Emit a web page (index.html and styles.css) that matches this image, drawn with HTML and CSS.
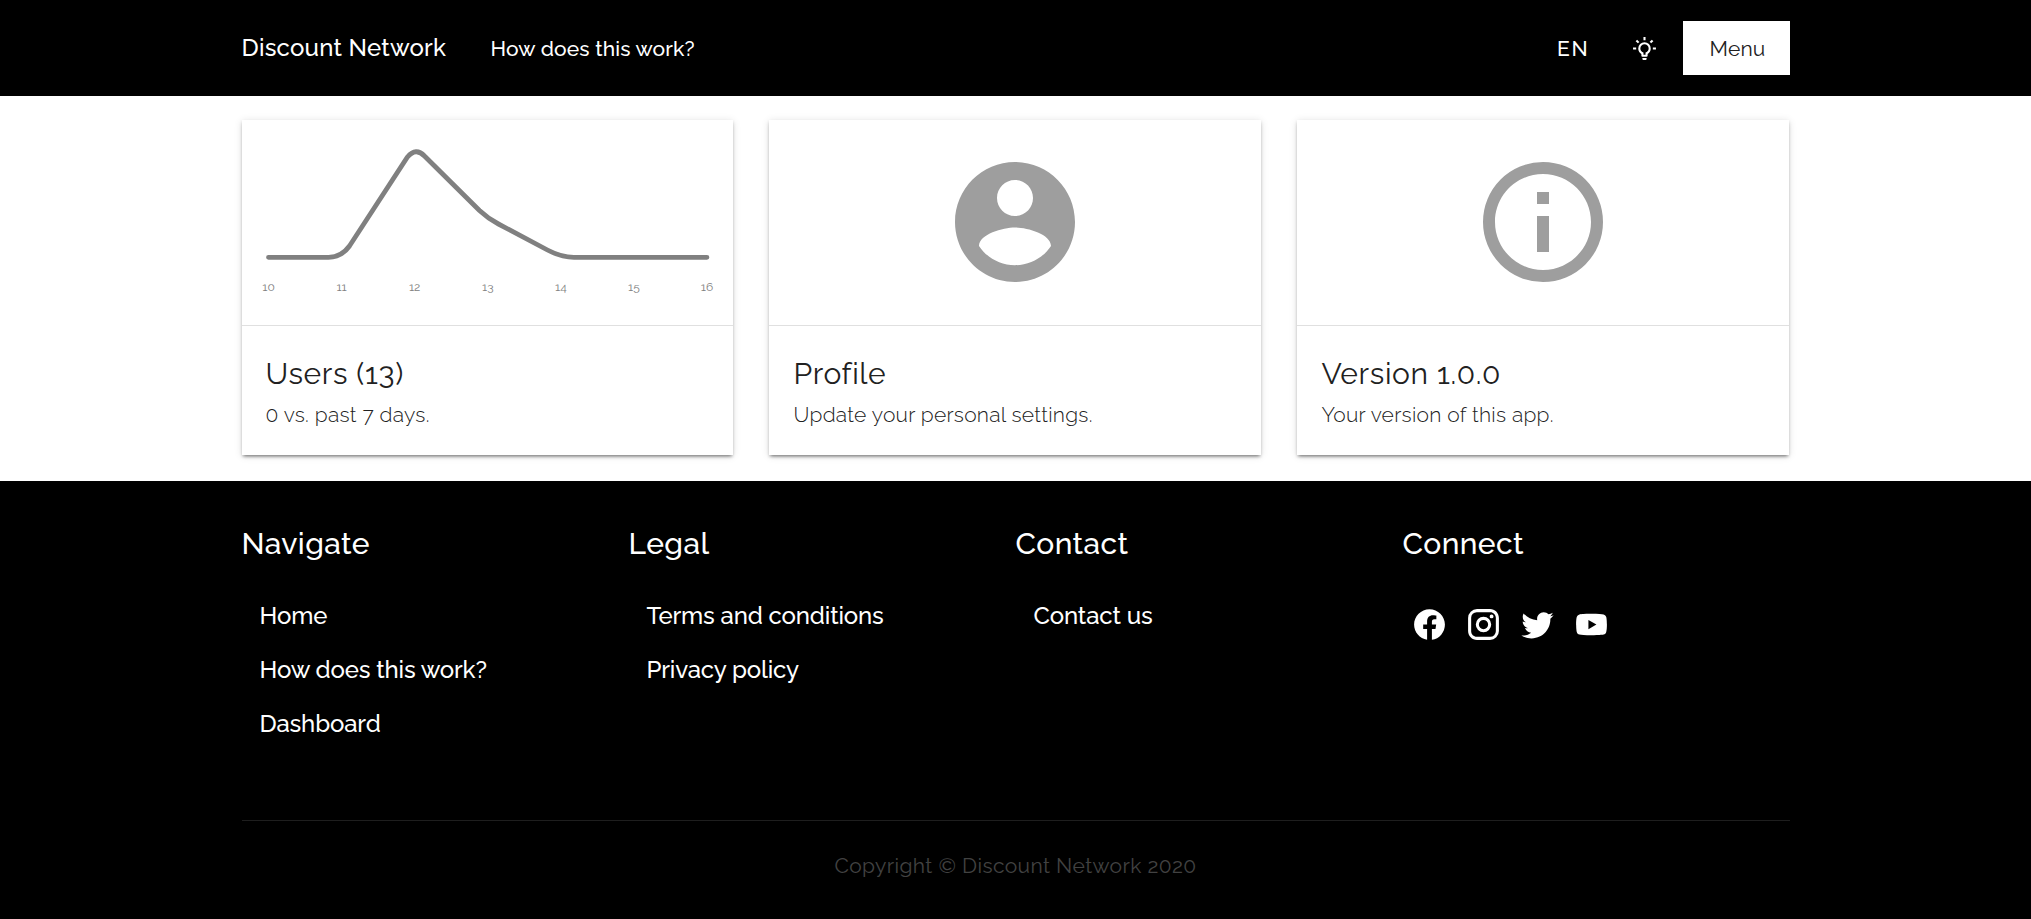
FILE: index.html
```html
<!DOCTYPE html>
<html lang="en">
<head>
<meta charset="utf-8">
<title>Discount Network</title>
<link rel="stylesheet" href="styles.css">
</head>
<body>
<header class="header">
  <div class="container bar">
    <a class="brand">Discount Network</a>
    <a class="nav-link">How does this work?</a>
    <div class="actions">
      <span class="lang">EN</span>
      <svg class="bulb" viewBox="0 0 24 24"><path d="M20,11H23V13H20V11M1,11H4V13H1V11M13,1V4H11V1H13M4.92,3.5L7.05,5.64L5.63,7.05L3.5,4.93L4.92,3.5M16.95,5.63L19.07,3.5L20.5,4.93L18.37,7.05L16.95,5.63M12,6A6,6 0 0,1 18,12C18,14.22 16.79,16.16 15,17.2V19A1,1 0 0,1 14,20H10A1,1 0 0,1 9,19V17.2C7.21,16.16 6,14.22 6,12A6,6 0 0,1 12,6M14,21V22A1,1 0 0,1 13,23H11A1,1 0 0,1 10,22V21H14M11,18H13V15.87C14.73,15.43 16,13.86 16,12A4,4 0 0,0 12,8A4,4 0 0,0 8,12C8,13.86 9.27,15.43 11,15.87V18Z"/></svg>
      <button class="menu">Menu</button>
    </div>
  </div>
</header>
<main class="container cards">
  <article class="card">
    <div class="media">
      <svg class="chart" viewBox="0 0 492 205">
        <path class="trend" d="M26.5 137.3H86.5Q99.5 137.3 107.5 126L165.5 37Q174 27 182.5 36L237.500 90.500Q246 98.500 256.500 104L305.500 130Q319.500 137.300 332 137.300H465"/>
        <g class="ticks"><text x="26.500" y="171">10</text><text x="99.600" y="171">11</text><text x="172.700" y="171">12</text><text x="245.800" y="171">13</text><text x="318.900" y="171">14</text><text x="392" y="171">15</text><text x="465" y="171">16</text></g>
      </svg>
    </div>
    <div class="body"><h2 class="title">Users (13)</h2><p class="sub">0 vs. past 7 days.</p></div>
  </article>
  <article class="card">
    <div class="media"><svg class="glyph" viewBox="0 0 24 24"><path d="M12 2C6.480 2 2 6.480 2 12s4.480 10 10 10 10-4.480 10-10S17.520 2 12 2zm0 3c1.660 0 3 1.340 3 3s-1.340 3-3 3-3-1.340-3-3 1.340-3 3-3zm0 14.200c-2.500 0-4.710-1.280-6-3.220.030-1.990 4-3.080 6-3.080 1.990 0 5.970 1.090 6 3.080-1.290 1.940-3.500 3.220-6 3.220z"/></svg></div>
    <div class="body"><h2 class="title">Profile</h2><p class="sub">Update your personal settings.</p></div>
  </article>
  <article class="card">
    <div class="media"><svg class="glyph" viewBox="0 0 24 24"><path d="M11 9h2V7h-2m1 13c-4.410 0-8-3.590-8-8s3.590-8 8-8 8 3.590 8 8-3.590 8-8 8m0-18A10 10 0 0 0 2 12a10 10 0 0 0 10 10 10 10 0 0 0 10-10A10 10 0 0 0 12 2m-1 15h2v-6h-2v6z"/></svg></div>
    <div class="body"><h2 class="title">Version 1.0.0</h2><p class="sub">Your version of this app.</p></div>
  </article>
</main>
<footer class="footer">
  <div class="container">
    <div class="columns">
      <section><h3 class="heading">Navigate</h3>
        <ul class="links"><li>Home</li><li>How does this work?</li><li>Dashboard</li></ul></section>
      <section><h3 class="heading">Legal</h3>
        <ul class="links"><li>Terms and conditions</li><li>Privacy policy</li></ul></section>
      <section><h3 class="heading">Contact</h3>
        <ul class="links"><li>Contact us</li></ul></section>
      <section><h3 class="heading">Connect</h3>
        <div class="social">
          <svg viewBox="0 0 24 24"><path d="M12 2.040C6.500 2.040 2 6.530 2 12.060C2 17.060 5.660 21.210 10.440 21.960V14.960H7.900V12.060H10.440V9.850C10.440 7.340 11.930 5.960 14.220 5.960C15.310 5.960 16.450 6.150 16.450 6.150V8.620H15.190C13.950 8.620 13.560 9.390 13.560 10.180V12.060H16.340L15.890 14.960H13.560V21.960A10 10 0 0 0 22 12.060C22 6.530 17.500 2.040 12 2.040Z"/></svg>
          <svg viewBox="0 0 24 24"><path d="M7.800,2H16.200C19.400,2 22,4.600 22,7.800V16.200A5.800,5.800 0 0,1 16.200,22H7.800C4.600,22 2,19.400 2,16.200V7.800A5.800,5.800 0 0,1 7.800,2M7.600,4A3.600,3.600 0 0,0 4,7.600V16.400C4,18.390 5.610,20 7.600,20H16.400A3.600,3.600 0 0,0 20,16.400V7.600C20,5.610 18.390,4 16.400,4H7.600M17.250,5.500A1.250,1.250 0 0,1 18.500,6.750A1.250,1.250 0 0,1 17.250,8A1.250,1.250 0 0,1 16,6.750A1.250,1.250 0 0,1 17.250,5.500M12,7A5,5 0 0,1 17,12A5,5 0 0,1 12,17A5,5 0 0,1 7,12A5,5 0 0,1 12,7M12,9A3,3 0 0,0 9,12A3,3 0 0,0 12,15A3,3 0 0,0 15,12A3,3 0 0,0 12,9Z"/></svg>
          <svg viewBox="0 0 24 24"><path d="M22.460,6C21.690,6.350 20.860,6.580 20,6.690C20.880,6.160 21.560,5.320 21.880,4.310C21.050,4.810 20.130,5.160 19.160,5.360C18.370,4.500 17.260,4 16,4C13.650,4 11.730,5.920 11.730,8.290C11.730,8.630 11.770,8.960 11.840,9.270C8.280,9.090 5.110,7.380 3,4.790C2.630,5.420 2.420,6.160 2.420,6.940C2.420,8.430 3.170,9.750 4.330,10.500C3.620,10.500 2.960,10.300 2.380,10V10.030C2.380,12.110 3.860,13.850 5.820,14.240C5.460,14.340 5.080,14.390 4.690,14.390C4.420,14.390 4.150,14.360 3.890,14.310C4.430,16 6,17.260 7.890,17.290C6.430,18.450 4.580,19.130 2.560,19.130C2.220,19.130 1.880,19.110 1.540,19.070C3.440,20.290 5.700,21 8.120,21C16,21 20.330,14.460 20.330,8.790C20.330,8.600 20.330,8.420 20.320,8.230C21.160,7.630 21.880,6.870 22.460,6Z"/></svg>
          <svg viewBox="0 0 24 24"><path d="M10,15L15.190,12L10,9V15M21.560,7.170C21.690,7.640 21.780,8.270 21.840,9.070C21.910,9.870 21.940,10.560 21.940,11.160L22,12C22,14.190 21.840,15.800 21.560,16.830C21.310,17.730 20.730,18.310 19.830,18.560C19.360,18.690 18.500,18.780 17.180,18.840C15.880,18.910 14.690,18.940 13.590,18.940L12,19C7.810,19 5.200,18.840 4.170,18.560C3.270,18.310 2.690,17.730 2.440,16.830C2.310,16.360 2.220,15.730 2.160,14.930C2.090,14.130 2.060,13.440 2.060,12.840L2,12C2,9.810 2.160,8.200 2.440,7.170C2.690,6.270 3.270,5.690 4.170,5.440C4.640,5.310 5.500,5.220 6.820,5.160C8.120,5.090 9.310,5.060 10.410,5.060L12,5C16.190,5 18.800,5.160 19.830,5.440C20.730,5.690 21.310,6.270 21.560,7.170Z"/></svg>
        </div></section>
    </div>
    <p class="copyright">Copyright © Discount Network 2020</p>
  </div>
</footer>
</body>
</html>
```
FILE: styles.css
```css
* { box-sizing: border-box; margin: 0; padding: 0; }
body { background: #fff; font-family: Raleway, Lato, "Open Sans", sans-serif; font-variant-numeric: oldstyle-nums; color: #212121; }
svg { display: block; flex: none; }
.container { width: 1548px; margin: 0 auto; }
.header { background: #000; color: #fff; height: 96px; }
.bar { display: flex; align-items: center; height: 96px; white-space: nowrap; }
.brand { width: 249px; font-size: 24px; font-weight: 500; letter-spacing: .009375em; padding-bottom: 1px; }
.nav-link { font-size: 21px; font-weight: 500; letter-spacing: .00714em; padding-top: 1px; }
.actions { margin-left: auto; display: flex; align-items: center; }
.lang { font-size: 21px; font-weight: 500; letter-spacing: 1.875px; margin-right: 42px; padding-top: 1px; }
.bulb { width: 25px; height: 25px; fill: #fff; margin-right: 26px; }
.menu { width: 107px; height: 54px; border: 0; background: #fff; color: #212121; font: inherit; font-size: 21px; letter-spacing: .15px; padding: 1px 0 0 3px; }
.cards { display: grid; grid-template-columns: repeat(3, 491.94px); gap: 36px; padding: 24px 0 26px; }
.card { height: 335px; background: #fff; box-shadow: 0 3px 3px -2px rgba(0,0,0,.4), 0 2px 3px 0 rgba(0,0,0,.16), 0 1px 8px 0 rgba(0,0,0,.12); }
.media { height: 206px; border-bottom: 1px solid #e0e0e0; display: flex; justify-content: center; }
.chart { width: 100%; height: 205px; }
.trend { fill: none; stroke: #808080; stroke-width: 4.8; stroke-linecap: round; }
.ticks { font-size: 12px; fill: #808080; text-anchor: middle; }
.glyph { width: 144px; height: 144px; margin-top: 30px; fill: #9e9e9e; }
.body { padding: 28px 24px 0; }
.title { font-size: 30px; font-weight: 400; line-height: 39px; letter-spacing: .021em; }
.sub { font-size: 21px; font-weight: 300; line-height: 31px; letter-spacing: .27px; margin-top: 6px; color: #212121; }
.footer { background: #000; color: #fff; height: 438px; padding-top: 43px; }
.columns { display: grid; grid-template-columns: repeat(4, 387px); height: 296px; }
.heading { font-size: 30px; font-weight: 500; line-height: 39px; letter-spacing: .0125em; margin-bottom: 1px; }
.links { list-style: none; padding: 24.5px 0 0 18px; font-size: 24px; font-weight: 500; letter-spacing: -.15px; }
.links li { height: 54px; line-height: 54px; }
.social { display: flex; gap: 17px; padding: 42px 0 0 8.5px; }
.social svg { width: 37px; height: 37px; fill: #fff; }
.copyright { border-top: 1px solid #1e1e1e; padding-top: 30px; text-align: center; font-size: 21px; line-height: 29px; letter-spacing: .017857em; color: #424242; }
```
